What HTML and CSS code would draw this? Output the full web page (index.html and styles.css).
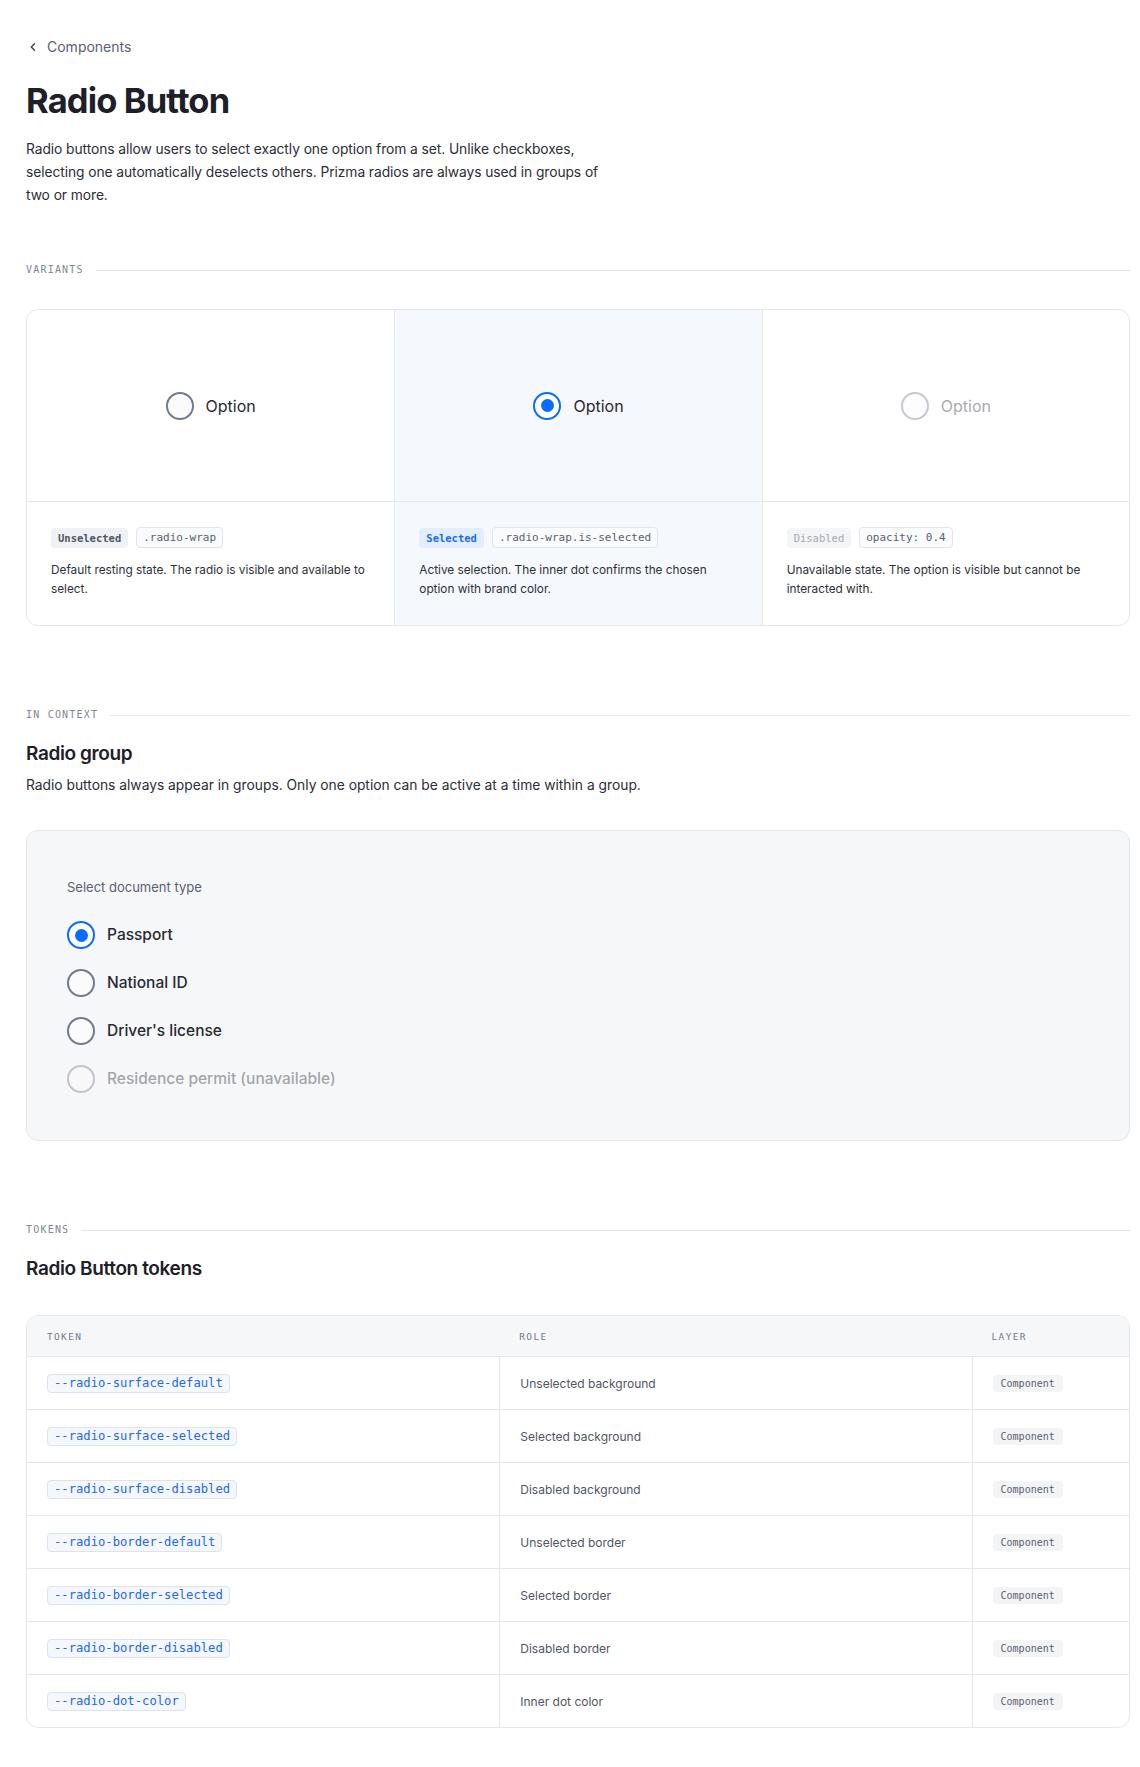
FILE: index.html
```html
<!DOCTYPE html>
<html lang="en">
<head>
<meta charset="utf-8">
<title>Radio Button</title>
<link rel="stylesheet" href="styles.css">
</head>
<body>
<main class="page">
  <a class="crumb" href="#">
    <svg class="crumb-icon" width="10" height="10" viewBox="0 0 10 10" aria-hidden="true"><path d="M6.5 1.8 3.3 5l3.2 3.2" fill="none" stroke="currentColor" stroke-width="1.4" stroke-linecap="round" stroke-linejoin="round"/></svg>
    <span>Components</span>
  </a>
  <h1 class="title">Radio Button</h1>
  <p class="lead">Radio buttons allow users to select exactly one option from a set. Unlike checkboxes, selecting one automatically deselects others. Prizma radios are always used in groups of two or more.</p>

  <div class="section-label section-label--first"><span>VARIANTS</span></div>
  <div class="variants">
    <div class="variant">
      <div class="preview">
        <label class="radio-wrap"><span class="radio"></span><span class="radio-text">Option</span></label>
      </div>
      <div class="info">
        <div class="tags"><span class="state state--default">Unselected</span><span class="code">.radio-wrap</span></div>
        <p class="desc">Default resting state. The radio is visible and available to select.</p>
      </div>
    </div>
    <div class="variant variant--active">
      <div class="preview">
        <label class="radio-wrap"><span class="radio radio--on"></span><span class="radio-text">Option</span></label>
      </div>
      <div class="info">
        <div class="tags"><span class="state state--selected">Selected</span><span class="code">.radio-wrap.is-selected</span></div>
        <p class="desc">Active selection. The inner dot confirms the chosen option with brand color.</p>
      </div>
    </div>
    <div class="variant">
      <div class="preview">
        <label class="radio-wrap radio-wrap--disabled"><span class="radio"></span><span class="radio-text">Option</span></label>
      </div>
      <div class="info">
        <div class="tags"><span class="state state--disabled">Disabled</span><span class="code">opacity: 0.4</span></div>
        <p class="desc">Unavailable state. The option is visible but cannot be interacted with.</p>
      </div>
    </div>
  </div>

  <div class="section-label"><span>IN CONTEXT</span></div>
  <h2 class="subtitle">Radio group</h2>
  <p class="subdesc">Radio buttons always appear in groups. Only one option can be active at a time within a group.</p>
  <div class="group-box">
    <div class="group-label">Select document type</div>
    <div class="group-list">
      <label class="radio-wrap radio-wrap--lg"><span class="radio radio--on"></span><span class="radio-text">Passport</span></label>
      <label class="radio-wrap radio-wrap--lg"><span class="radio"></span><span class="radio-text">National ID</span></label>
      <label class="radio-wrap radio-wrap--lg"><span class="radio"></span><span class="radio-text">Driver's license</span></label>
      <label class="radio-wrap radio-wrap--lg radio-wrap--disabled"><span class="radio"></span><span class="radio-text">Residence permit (unavailable)</span></label>
    </div>
  </div>

  <div class="section-label"><span>TOKENS</span></div>
  <h2 class="subtitle">Radio Button tokens</h2>
  <div class="table">
    <div class="row row--head"><div class="cell">TOKEN</div><div class="cell">ROLE</div><div class="cell">LAYER</div></div>
    <div class="row"><div class="cell"><code class="token">--radio-surface-default</code></div><div class="cell role">Unselected background</div><div class="cell"><span class="layer">Component</span></div></div>
    <div class="row"><div class="cell"><code class="token">--radio-surface-selected</code></div><div class="cell role">Selected background</div><div class="cell"><span class="layer">Component</span></div></div>
    <div class="row"><div class="cell"><code class="token">--radio-surface-disabled</code></div><div class="cell role">Disabled background</div><div class="cell"><span class="layer">Component</span></div></div>
    <div class="row"><div class="cell"><code class="token">--radio-border-default</code></div><div class="cell role">Unselected border</div><div class="cell"><span class="layer">Component</span></div></div>
    <div class="row"><div class="cell"><code class="token">--radio-border-selected</code></div><div class="cell role">Selected border</div><div class="cell"><span class="layer">Component</span></div></div>
    <div class="row"><div class="cell"><code class="token">--radio-border-disabled</code></div><div class="cell role">Disabled border</div><div class="cell"><span class="layer">Component</span></div></div>
    <div class="row"><div class="cell"><code class="token">--radio-dot-color</code></div><div class="cell role">Inner dot color</div><div class="cell"><span class="layer">Component</span></div></div>
  </div>
</main>
</body>
</html>
```

FILE: styles.css
```css
* { box-sizing: border-box; }

html, body { margin: 0; padding: 0; background: #ffffff; }

body {
  font-family: Inter, "Noto Sans", sans-serif;
  color: #1e2129;
  -webkit-font-smoothing: antialiased;
}

.page {
  padding: 36px 10px 60px 26px;
}

.crumb {
  display: inline-flex;
  align-items: center;
  gap: 9px;
  font-size: 14px;
  line-height: 20px;
  color: #596075;
  text-decoration: none;
  padding-left: 2px;
}

.crumb-icon { color: #3b4152; }

.title {
  margin: 22px 0 0;
  font-size: 34.5px;
  line-height: 44px;
  font-weight: 700;
  letter-spacing: -0.025em;
  color: #1d2029;
}

.lead {
  margin: 15px 0 0;
  max-width: 587px;
  font-size: 13.8px;
  line-height: 23px;
  color: #2a2e38;
  letter-spacing: -0.005em;
}

.section-label {
  display: flex;
  align-items: center;
  gap: 12px;
  margin-top: 82px;
  font-family: "DejaVu Sans Mono", "Liberation Mono", monospace;
  font-size: 10px;
  letter-spacing: 0.12em;
  line-height: 14px;
  color: #80869a;
}

.section-label::after {
  content: "";
  flex: 1;
  height: 1px;
  background: #e6e8ee;
}

.section-label--first { margin-top: 56px; }

.variants {
  margin-top: 32px;
  display: grid;
  grid-template-columns: repeat(3, 1fr);
  border: 1px solid #e5e7ec;
  border-radius: 12px;
  overflow: hidden;
}

.variant {
  display: flex;
  flex-direction: column;
}

.variant + .variant { border-left: 1px solid #e5e7ec; }

.variant--active { background: #f5f8fd; }

.preview {
  height: 192px;
  display: flex;
  align-items: center;
  justify-content: center;
  border-bottom: 1px solid #e5e7ec;
}

.info {
  padding: 25px 24px 26px;
}

.tags {
  display: flex;
  align-items: center;
  gap: 8px;
}

.state {
  font-family: "DejaVu Sans Mono", "Liberation Mono", monospace;
  font-size: 10.5px;
  font-weight: 700;
  line-height: 20px;
  padding: 0 7px;
  border-radius: 4px;
}

.state--default { background: #f0f1f4; color: #4f5566; }
.state--selected { background: #e2edfd; color: #1c6cf2; }
.state--disabled { background: #f4f5f7; color: #a5a9b3; font-weight: 400; }

.code {
  font-family: "DejaVu Sans Mono", "Liberation Mono", monospace;
  font-size: 11px;
  line-height: 19px;
  padding: 0 6px;
  border: 1px solid #e2e4ea;
  border-radius: 4px;
  background: #fafbfc;
  color: #5a6072;
}

.desc {
  margin: 13px 0 0;
  font-size: 11.8px;
  line-height: 19px;
  color: #2c303a;
}

.radio-wrap {
  display: inline-flex;
  align-items: center;
  gap: 12px;
  cursor: pointer;
}

.radio {
  width: 28px;
  height: 28px;
  border-radius: 50%;
  border: 2px solid #737a8d;
  background: #fbfbfc;
  display: inline-flex;
  align-items: center;
  justify-content: center;
  flex: none;
}

.radio--on {
  border-color: #0b6bff;
  background: #ffffff;
}

.radio--on::after {
  content: "";
  width: 13px;
  height: 13px;
  border-radius: 50%;
  background: #0b6bff;
}

.radio-text {
  font-size: 16px;
  line-height: 24px;
  color: #262a33;
}

.radio-wrap--disabled { opacity: 0.4; cursor: default; }

.subtitle {
  margin: 18px 0 0;
  font-size: 19px;
  line-height: 28px;
  font-weight: 600;
  letter-spacing: -0.02em;
  color: #1d2029;
}

.subdesc {
  margin: 6px 0 0;
  font-size: 13.8px;
  line-height: 22px;
  color: #2a2e38;
}

.group-box {
  margin-top: 34px;
  background: #f6f7f9;
  border: 1px solid #e5e7ec;
  border-radius: 12px;
  padding: 47px 40px 47px;
}

.group-label {
  font-size: 13px;
  line-height: 18px;
  color: #5a6072;
}

.group-list {
  margin-top: 25px;
  display: flex;
  flex-direction: column;
  align-items: flex-start;
  gap: 20px;
}

.radio-wrap--lg .radio-text {
  font-size: 15.5px;
  font-weight: 500;
}

.table {
  margin-top: 32px;
  border: 1px solid #e5e7ec;
  border-radius: 12px;
  overflow: hidden;
}

.row {
  display: grid;
  grid-template-columns: 3fr 3fr 1fr;
  min-height: 53px;
  align-items: stretch;
}

.row + .row { border-top: 1px solid #e5e7ec; }

.row--head {
  min-height: 40px;
  background: #f6f7f9;
  font-family: "DejaVu Sans Mono", "Liberation Mono", monospace;
  font-size: 9.5px;
  letter-spacing: 0.14em;
  color: #747b8e;
}

.cell {
  display: flex;
  align-items: center;
  padding: 0 20px;
}

.row:not(.row--head) .cell + .cell { border-left: 1px solid #e5e7ec; }

.token {
  font-family: "DejaVu Sans Mono", "Liberation Mono", monospace;
  font-size: 12.2px;
  line-height: 17px;
  padding: 0 6px;
  color: #2468ee;
  background: #f4f7fc;
  border: 1px solid #dde3ee;
  border-radius: 4px;
}

.role {
  font-size: 12px;
  color: #4f5566;
}

.layer {
  font-family: "DejaVu Sans Mono", "Liberation Mono", monospace;
  font-size: 10px;
  line-height: 17px;
  padding: 0 8px;
  color: #5a6072;
  background: #f3f4f6;
  border-radius: 4px;
}
```
